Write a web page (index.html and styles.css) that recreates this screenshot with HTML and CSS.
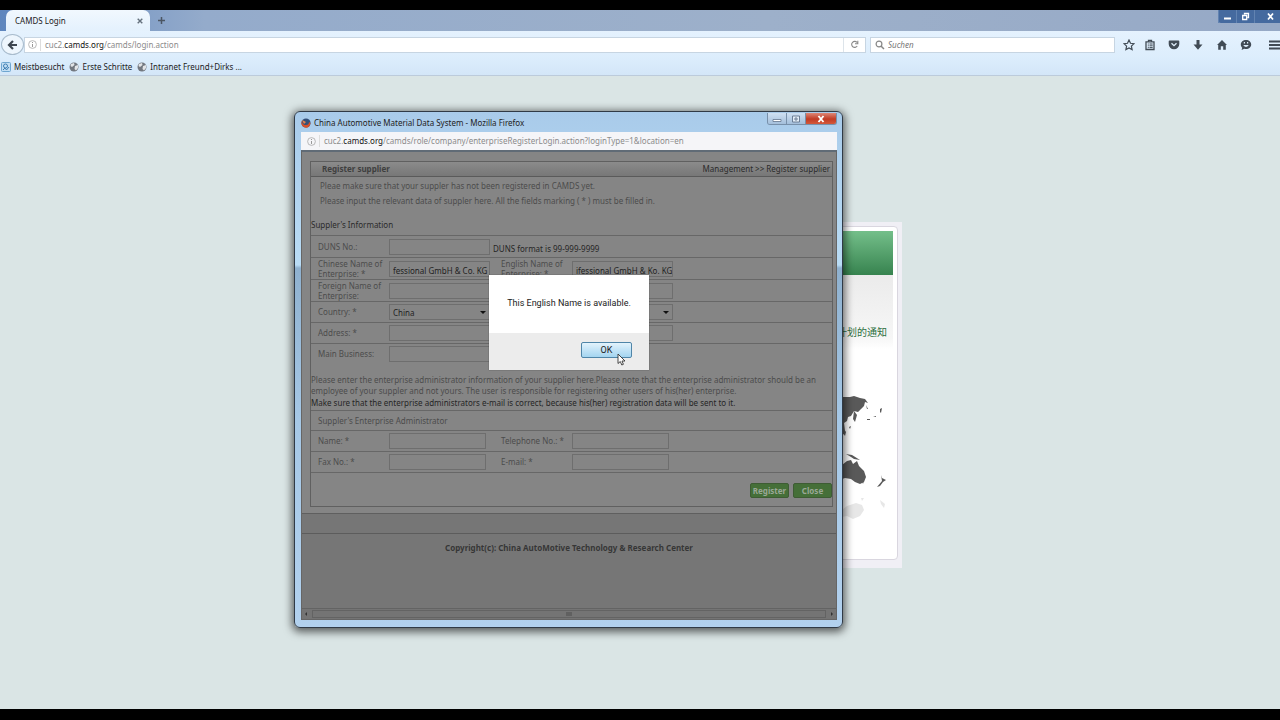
FILE: index.html
```html
<!DOCTYPE html>
<html lang="en">
<head>
<meta charset="utf-8">
<title>CAMDS Login</title>
<link rel="stylesheet" href="styles.css">
</head>
<body>
<div class="screen">
  <header class="browser">
    <div class="tabstrip">
      <div class="tab"><span>CAMDS Login</span><button class="plain" aria-label="Close tab"><svg width="6" height="6" viewBox="0 0 6 6"><path d="M.7.7l4.6 4.6M5.3.7L.7 5.3" stroke="#65717d" stroke-width="1.4"/></svg></button></div>
      <button class="plain newtab" aria-label="New tab"><svg width="9" height="9" viewBox="0 0 9 9"><path d="M4.500 1v7M1 4.500h7" stroke="#4b5663" stroke-width="1.500"/></svg></button>
      <div class="wincontrols">
        <button class="plain" aria-label="Minimize"><svg width="9" height="9" viewBox="0 0 9 9"><path d="M1 5.500h7v2H1z" fill="#fff"/></svg></button>
        <button class="plain" aria-label="Restore"><svg width="9" height="9" viewBox="0 0 9 9"><path d="M3.500 2.500v-1h4v4h-1M1.700 3.500h4v4h-4z" fill="none" stroke="#fff" stroke-width="1.300"/></svg></button>
        <button class="plain wide" aria-label="Close"><svg width="9" height="9" viewBox="0 0 9 9"><path d="M2 1.500l5 6M7 1.500l-5 6" stroke="#fff" stroke-width="1.700"/></svg></button>
      </div>
    </div>
    <div class="navbar">
      <button class="plain back" aria-label="Back"><svg width="12" height="10" viewBox="0 0 12 10"><path d="M6 1L2 5l4 4M2.500 5H10" fill="none" stroke="#3e4650" stroke-width="2.200"/></svg></button>
      <div class="urlbar">
        <svg width="9" height="9" viewBox="0 0 9 9"><circle cx="4.500" cy="4.500" r="3.900" fill="none" stroke="#aaa" stroke-width=".8"/><path d="M4.500 4v3M4.500 2v1" stroke="#999"/></svg>
        <span class="address">cuc2.<b>camds.org</b>/camds/login.action</span>
        <button class="plain reload" aria-label="Reload"><svg width="9" height="9" viewBox="0 0 9 9"><path d="M7 2.500A3 3 0 1 0 7.200 6M7.800.7v3H5" fill="none" stroke="#888" stroke-width="1.100"/></svg></button>
      </div>
      <div class="search">
        <svg width="10" height="10" viewBox="0 0 10 10"><circle cx="4" cy="4" r="2.900" fill="none" stroke="#888" stroke-width="1.200"/><path d="M6 6l3 3" stroke="#888" stroke-width="1.500"/></svg>
        <input type="search" placeholder="Suchen" aria-label="Suchen">
      </div>
      <button class="plain star" aria-label="Bookmark"><svg width="12" height="12" viewBox="0 0 12 12"><path d="M6 1l1.500 3.300 3.500.4-2.600 2.400.7 3.500L6 8.900l-3.100 1.700.7-3.500L1 4.700l3.500-.4z" fill="none" stroke="#414b55" stroke-width="1.200"/></svg></button>
      <div class="tools">
        <button class="plain" aria-label="Reading list"><svg width="12" height="12" viewBox="0 0 12 12"><path d="M4.500 2.500V1.300h3v1.200M2 2.800h8v7.700H2z" fill="none" stroke="#414b55" stroke-width="1.300"/><path d="M3.800 5h1M5.500 5h3.200M3.800 6.800h1M5.500 6.800h3.200M3.800 8.600h1M5.500 8.600h3.200" stroke="#414b55"/></svg></button>
        <button class="plain" aria-label="Pocket"><svg width="12" height="12" viewBox="0 0 12 12"><path d="M1.500 1.500h9q.8 0 .8 1V5a5.300 5.300 0 0 1-10.600 0V2.500q0-1 .8-1z" fill="#414b55"/><path d="M3.500 4.300L6 6.700l2.500-2.400" fill="none" stroke="#e0effc" stroke-width="1.300"/></svg></button>
        <button class="plain" aria-label="Downloads"><svg width="12" height="12" viewBox="0 0 12 12"><path d="M4.500 1h3v4.500h3L6 10.800 1.500 5.500h3z" fill="#414b55"/></svg></button>
        <button class="plain" aria-label="Home"><svg width="12" height="12" viewBox="0 0 12 12"><path d="M6 1l5 5H9.800v4.700H7.200V7.200H4.800v3.500H2.200V6H1z" fill="#414b55"/></svg></button>
        <button class="plain" aria-label="Chat"><svg width="12" height="12" viewBox="0 0 12 12"><path d="M6 1c3 0 5.200 1.800 5.200 4.500S9 10 6 10c-.6 0-1.200 0-1.700-.2L1.600 11l.6-2.300C1.300 7.900.8 6.800.8 5.500.8 2.800 3 1 6 1z" fill="#414b55"/><path d="M3.200 6q2.800 4 5.600 0z" fill="#dcecf8"/><path d="M4.400 3v1.600M7.600 3v1.600" stroke="#dcecf8" stroke-width="1.200"/></svg></button>
      </div>
      <button class="plain menu" aria-label="Menu"><svg width="11" height="10" viewBox="0 0 11 10"><path d="M0 1.500h11M0 5h11M0 8.500h11" stroke="#414b55" stroke-width="1.800"/></svg></button>
    </div>
    <nav class="bookmarks">
      <a href="#"><svg width="10" height="10" viewBox="0 0 10 10"><rect x=".5" y=".5" width="9" height="9" rx="1" fill="#c3def2" stroke="#6fa6d0"/><circle cx="4.500" cy="4" r="2" fill="none" stroke="#3f7fb4"/><path d="M2 8l2-2 1.500 2L8 5" fill="none" stroke="#3f7fb4"/></svg>Meistbesucht</a>
      <a href="#"><svg width="10" height="10" viewBox="0 0 10 10"><circle cx="5" cy="5" r="4.500" fill="#737880"/><path d="M2 2l3-1 .5 2L3 5 1.500 4zM6 4l3-1v3L7 8.500 5.500 7z" fill="#e2e4e7"/></svg>Erste Schritte</a>
      <a href="#"><svg width="10" height="10" viewBox="0 0 10 10"><circle cx="5" cy="5" r="4.500" fill="#737880"/><path d="M2 2l3-1 .5 2L3 5 1.500 4zM6 4l3-1v3L7 8.500 5.500 7z" fill="#e2e4e7"/></svg>Intranet Freund+Dirks ...</a>
    </nav>
  </header>

  <main class="page">
    <section class="card">
      <div class="cardinner">
        <div class="banner"></div>
        <div class="notice" lang="zh">计划的通知</div>
        <svg class="map" width="50" height="150" viewBox="842 390 50 150" aria-hidden="true">
          <g fill="#595959"><path d="M842 396l8 0 4-1 6 2 5 1 3 4-3-1-1 4-3 3-3 3-4-1-3 5-3 1-1 4-3 2 1 8-2 4zM854 410l3 4-2 7-2-3zM844 428l2 3-1 4-2-3zM866 404l2 4-1 0zM880 408l2-1-1 5-1-1zM867 418h3v1h-3zM873 416l3-1v1zM849 426l2-1-1 3z"/><path d="M846 453l6 1 8 5-6-1-3-2zM842 464l5-4 4-1 2 4 4-3 2 5 5 5 2 6-2 5-4 2-5-2-4-3-6-1-3 1zM862 480l2 0-1 3zM881 474l1 3 4 2-3 2-3 4-3 1 5-6z"/></g>
          <g fill="#e7e7e7"><path d="M842 509l5-4 9-3 6 2 2 5-4 6-7 3-6-3-5 1zM880 499l5 4-1 4-3-4zM861 497l3 0-2 3z"/></g>
        </svg>
      </div>
    </section>
  </main>
</div>

<section class="window" aria-label="China Automotive Material Data System">
  <div class="titlebar">
    <svg width="10" height="10" viewBox="0 0 10 10"><circle cx="5" cy="5" r="4.600" fill="#344f78"/><path d="M1 2c0 3 1 5 4 5 2 0 3-1 3-3l1.500 1C9 8 7.500 9.700 5 9.700S.3 7.500.4 5z" fill="#d8502a"/><path d="M1 2l2 1 2 1-2 2z" fill="#e9814a"/></svg>
    <span>China Automotive Material Data System - Mozilla Firefox</span>
    <div class="popcontrols">
      <button class="plain" aria-label="Minimize"><svg width="10" height="8" viewBox="0 0 10 8"><path d="M1 4.500h8v2H1z" fill="#fff" stroke="#62758d" stroke-width=".8"/></svg></button>
      <button class="plain" aria-label="Maximize"><svg width="10" height="8" viewBox="0 0 10 8"><path d="M1.500 1h7v6h-7zM4 3h2v2H4z" fill="#e4eef8" stroke="#62758d" stroke-width=".9"/></svg></button>
      <button class="plain red" aria-label="Close"><svg width="10" height="8" viewBox="0 0 10 8"><path d="M2.500 1l5 6M7.500 1l-5 6" stroke="#fff" stroke-width="1.900"/></svg></button>
    </div>
  </div>
  <div class="popurl">
    <svg width="9" height="9" viewBox="0 0 9 9"><circle cx="4.500" cy="4.500" r="3.900" fill="none" stroke="#aaa" stroke-width=".8"/><path d="M4.500 4v3M4.500 2v1" stroke="#999"/></svg>
    <span class="address">cuc2.<b>camds.org</b>/camds/role/company/enterpriseRegisterLogin.action?loginType=1&amp;location=en</span>
  </div>
  <div class="content">
    <div class="sheet">
      <form class="panel" onsubmit="return false">
        <div class="panelhead"><h1>Register supplier</h1><span>Management &gt;&gt; Register supplier</span></div>
        <div class="hints"><p>Pleae make sure that your suppler has not been registered in CAMDS yet.</p><p>Please input the relevant data of suppler here. All the fields marking ( * ) must be filled in.</p></div>
        <h2>Suppler's Information</h2>
        <div class="row tall"><label for="duns">DUNS No.:</label><input id="duns"><span class="dark">DUNS format is 99-999-9999</span></div>
        <div class="row tall"><label for="cn">Chinese Name of Enterprise: *</label><input id="cn" class="low" value="fessional GmbH &amp; Co. KG"><label for="en">English Name of Enterprise: *</label><input id="en" class="low" value="ifessional GmbH &amp; Ko. KG"></div>
        <div class="row tall"><label for="fn">Foreign Name of Enterprise:</label><input id="fn"><span></span><input aria-label="Postal code"></div>
        <div class="row"><label for="country">Country: *</label><span class="pick"><select id="country"><option>China</option></select></span><span></span><span class="pick"><select aria-label="Province"><option></option></select></span></div>
        <div class="row"><label for="addr">Address: *</label><input id="addr"><span></span><input aria-label="City"></div>
        <div class="row"><label for="biz">Main Business:</label><input id="biz"></div>
        <div class="explain"><p>Please enter the enterprise administrator information of your supplier here.Please note that the enterprise administrator should be an employee of your suppler and not yours. The user is responsible for registering other users of his(her) enterprise.</p><p class="dark">Make sure that the enterprise administrators e-mail is correct, because his(her) registration data will be sent to it.</p></div>
        <h3>Suppler's Enterprise Administrator</h3>
        <div class="row short"><label for="name">Name: *</label><input id="name"><label for="tel">Telephone No.: *</label><input id="tel"></div>
        <div class="row short end"><label for="fax">Fax No.: *</label><input id="fax"><label for="mail">E-mail: *</label><input id="mail"></div>
        <div class="actions"><button>Register</button><button>Close</button></div>
      </form>
    </div>
    <footer>Copyright(c): China AutoMotive Technology &amp; Research Center</footer>
    <div class="hscroll" aria-hidden="true"><svg width="4" height="6" viewBox="0 0 4 6"><path d="M3 1v4L1 3z" fill="#333"/></svg><i><svg width="6" height="4" viewBox="0 0 6 4"><path d="M1 0v4M3 0v4M5 0v4" stroke="#4c4c4c"/></svg></i><svg width="4" height="6" viewBox="0 0 4 6"><path d="M1 1v4l2-2z" fill="#333"/></svg></div>
  </div>

  <div class="dialog" role="alertdialog" aria-labelledby="msg">
    <p id="msg">This English Name is available.</p>
    <div class="dialogfoot"><button>OK</button></div>
    <svg class="cursor" width="9" height="13" viewBox="0 0 9 13" aria-hidden="true"><path d="M1 1v9.500l2.300-2 1.500 3.500 1.600-.7L5 8h3z" fill="#fff" stroke="#333" stroke-width=".9"/></svg>
  </div>
</section>
</body>
</html>
```
FILE: styles.css
```css
* { box-sizing: border-box; }
body { margin: 0; background: #000; font: 8px/12px "Noto Sans", sans-serif; color: #222; }
p, h1, h2, h3 { margin: 0; font: inherit; }
svg { display: block; flex: none; }
button, input, select { font: inherit; color: inherit; margin: 0; padding: 0; border: 0; background: none; border-radius: 0; min-width: 0; }
.plain { display: flex; align-items: center; justify-content: center; }
.screen { display: flex; flex-direction: column; min-height: 100vh; padding: 10px 0 11px; overflow: hidden; }

.tabstrip { display: flex; height: 21px; background: linear-gradient(90deg, #5e86be, #94abcb 16%, #9db0ca 60%, #96a9c6); }
.tab { display: flex; align-items: center; justify-content: space-between; width: 144px; margin-left: 6px; padding: 0 7px 0 9px; background: linear-gradient(#f1f8fe, #e4f1fd); border-radius: 7px 7px 0 0; }
.newtab { width: 22px; }
.wincontrols { display: flex; height: 13px; margin-left: auto; background: #456a9f; border-radius: 0 0 0 3px; }
.wincontrols button { width: 18px; border-left: 1px solid #6283b1; }
.wincontrols .wide { width: 26px; padding-left: 5px; }
.navbar { display: flex; align-items: center; height: 27px; background: linear-gradient(#e5f2fe, #dcedfc); }
.back { width: 23px; height: 21px; margin-left: 1px; border: 1px solid #a9bccd; border-radius: 50%; background: #eef6fd; }
.urlbar, .search { display: flex; align-items: center; height: 16px; background: #fff; border: 1px solid #c7d5e2; }
.urlbar { flex: 1; padding-left: 3px; gap: 3px; }
.address { flex: 1; color: #8b8b8b; padding-left: 4px; border-left: 1px solid #ddd; white-space: nowrap; }
.address b { font-weight: 400; color: #111; }
.reload { width: 22px; height: 14px; border-left: 1px solid #dde4ea; }
.search { width: 245px; margin-left: 4px; padding-left: 4px; gap: 3px; }
.search input { flex: 1; font-style: italic; outline: 0; }
.search input::placeholder { color: #777; }
.star { margin: 0 9px 0 8px; }
.tools { display: flex; gap: 12px; }
.menu { margin-left: 17px; width: 11px; overflow: hidden; justify-content: flex-start; }
.bookmarks { display: flex; gap: 5px; height: 18px; padding-left: 1px; background: linear-gradient(#dcedfc, #d3e6f8); border-bottom: 1px solid #bccbdb; }
.bookmarks a { display: flex; align-items: center; gap: 3px; color: #222; text-decoration: none; }

.page { flex: 1; background: #dae5e5; }
.card { width: 524px; margin: 146px auto 0; padding: 4px 4px 8px; background: #f0eff5; }
.cardinner { height: 334px; padding: 4px; background: #fff; border: 1px solid #d9d6df; border-radius: 4px; }
.banner { height: 44px; background: linear-gradient(#74bf8a, #37834f); }
.notice { height: 114px; padding: 50px 6px 0; text-align: right; color: #2e7040; background: linear-gradient(#ebebeb, #f6f6f6 55%, #fff 65%); font: 10px/14px "Noto Sans CJK SC", sans-serif; }
.map { margin: 2px 1px 0 auto; }

.window { position: absolute; left: 294px; top: 111px; width: 549px; padding: 1px 5px 7px 6px; border: 1px solid #303a46; border-radius: 6px; background: linear-gradient(#a9cbea, #b9dcf5 153px, #8fb1cf 156px, #a6c8e6 60%, #b2d1ee); box-shadow: 0 2px 9px 2px #0009; }
.titlebar { display: flex; align-items: center; gap: 3px; height: 19px; }
.popcontrols { display: flex; align-self: flex-start; height: 12px; margin-left: auto; border: 1px solid #7890aa; border-top: 0; border-radius: 0 0 3px 3px; overflow: hidden; }
.popcontrols button { width: 19px; background: linear-gradient(#cfe0f2, #a4bfdb); border-right: 1px solid #7890aa; }
.popcontrols .red { width: 30px; border: 0; background: linear-gradient(#dd8777, #c13b25 55%, #d4583a); }
.popurl { display: flex; align-items: center; gap: 3px; height: 18px; padding-left: 6px; background: #f5f5f8; }
.content { background: #767676; line-height: 11px; color: #4c4c4c; border: 1px solid #666; border-top: 2px solid #606b76; }
.sheet { padding: 9px 3px 6px 8px; background: #858585; border-bottom: 1px solid #5f5f5f; }
.panel { border: 1px solid #606060; }
.panelhead { display: flex; justify-content: space-between; align-items: center; height: 15px; padding: 0 2px 1px 11px; background: linear-gradient(#8b8b8b, #777); border-bottom: 1px solid #5a5a5a; color: #2b2b2b; }
.panelhead h1 { font-weight: 700; color: #3f3f3f; }
.hints { padding: 1px 9px 2px; line-height: 15px; }
h2 { margin-top: 4px; line-height: 21px; color: #2b2b2b; }
.dark { color: #252525; }
.row { display: grid; grid-template-columns: 78px 101px 82px 101px; align-items: center; height: 21px; border-top: 1px solid #676767; }
.tall { height: 22px; }
.row label { padding-left: 7px; line-height: 10px; }
.row label:nth-of-type(2) { padding-left: 11px; }
.row > .dark { padding-left: 3px; white-space: nowrap; padding-top: 3px; }
.row input, .pick { height: 16px; border: 1px solid #6e6e6e; padding: 0 3px; color: #222; }
.row .low { padding: 3px 0 0 3px; }
.short input { width: 97px; }
.pick { display: grid; align-items: center; position: relative; }
.pick select { width: 100%; appearance: none; }
.pick::after { content: ""; position: absolute; right: 3px; top: 6px; border: 3px solid transparent; border-top-color: #111; border-bottom: 0; }
.explain { padding-top: 10px; }
.explain .dark { line-height: 14px; }
h3 { padding-left: 7px; line-height: 19px; border-top: 1px solid #676767; }
.end { border-bottom: 1px solid #676767; height: 22px; }
.actions { display: flex; justify-content: flex-end; gap: 4px; padding: 10px 0 8px; }
.actions button { width: 39px; height: 15px; border: 1px solid #3e5c34; border-radius: 2px; background: #456f38; color: #9ba897; font-weight: 700; }
footer { margin-top: 19px; border-top: 1px solid #5c5c5c; padding: 8px 0 0; height: 75px; text-align: center; font-weight: 700; color: #363636; }
.hscroll { display: flex; justify-content: space-between; align-items: center; gap: 4px; height: 11px; padding: 0 2px; background: #747474; border-top: 1px solid #636363; }
.hscroll i { display: flex; align-items: center; justify-content: center; flex: 1; height: 8px; border: 1px solid #636363; }

.dialog { position: absolute; left: 194px; top: 163px; width: 160px; background: #fff; box-shadow: 0 0 1px #444; font: 9px/12px Roboto, Arial, sans-serif; color: #222; }
.dialog p { padding: 22px 0 24px; text-align: center; }
.dialogfoot { display: flex; justify-content: flex-end; padding: 9px 17px 12px; background: #ececec; }
.dialogfoot button { width: 51px; height: 16px; border: 1px solid #4f85a8; border-radius: 2px; background: linear-gradient(#e3f3fc, #c6e5f7 45%, #a4d5f0); }
.cursor { position: absolute; left: 128px; top: 78px; }
```
